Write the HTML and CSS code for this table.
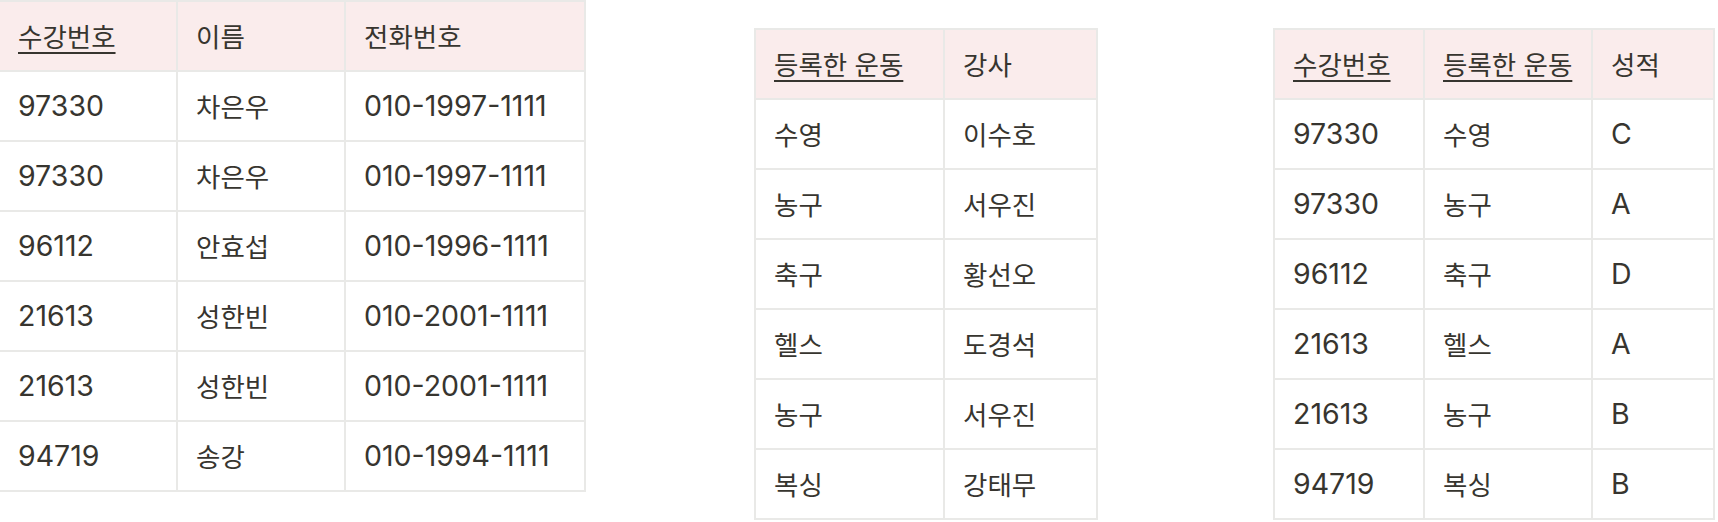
FILE: index.html
```html
<!DOCTYPE html>
<html lang="ko">
<head>
<meta charset="utf-8">
<title>수강 테이블</title>
<link rel="stylesheet" href="styles.css">
</head>
<body>
<div class="board">
  <table class="grid grid-students">
    <colgroup><col class="c178"><col class="c168"><col class="c240"></colgroup>
    <thead>
      <tr><th><span class="key">수강번호</span></th><th>이름</th><th>전화번호</th></tr>
    </thead>
    <tbody>
      <tr><td class="num">97330</td><td>차은우</td><td class="num">010-1997-1111</td></tr>
      <tr><td class="num">97330</td><td>차은우</td><td class="num">010-1997-1111</td></tr>
      <tr><td class="num">96112</td><td>안효섭</td><td class="num">010-1996-1111</td></tr>
      <tr><td class="num">21613</td><td>성한빈</td><td class="num">010-2001-1111</td></tr>
      <tr><td class="num">21613</td><td>성한빈</td><td class="num">010-2001-1111</td></tr>
      <tr><td class="num">94719</td><td>송강</td><td class="num">010-1994-1111</td></tr>
    </tbody>
  </table>

  <table class="grid grid-sports">
    <colgroup><col class="c189"><col class="c153"></colgroup>
    <thead>
      <tr><th><span class="key">등록한 운동</span></th><th>강사</th></tr>
    </thead>
    <tbody>
      <tr><td>수영</td><td>이수호</td></tr>
      <tr><td>농구</td><td>서우진</td></tr>
      <tr><td>축구</td><td>황선오</td></tr>
      <tr><td>헬스</td><td>도경석</td></tr>
      <tr><td>농구</td><td>서우진</td></tr>
      <tr><td>복싱</td><td>강태무</td></tr>
    </tbody>
  </table>

  <table class="grid grid-grades">
    <colgroup><col class="c150"><col class="c168"><col class="c122"></colgroup>
    <thead>
      <tr><th><span class="key">수강번호</span></th><th><span class="key">등록한 운동</span></th><th>성적</th></tr>
    </thead>
    <tbody>
      <tr><td class="num">97330</td><td>수영</td><td class="num">C</td></tr>
      <tr><td class="num">97330</td><td>농구</td><td class="num">A</td></tr>
      <tr><td class="num">96112</td><td>축구</td><td class="num">D</td></tr>
      <tr><td class="num">21613</td><td>헬스</td><td class="num">A</td></tr>
      <tr><td class="num">21613</td><td>농구</td><td class="num">B</td></tr>
      <tr><td class="num">94719</td><td>복싱</td><td class="num">B</td></tr>
    </tbody>
  </table>
</div>
</body>
</html>
```

FILE: styles.css
```css
html, body {
  margin: 0;
  padding: 0;
  background: #ffffff;
  overflow: hidden;
}

.board {
  display: flex;
  align-items: flex-start;
  width: 1718px;
  height: 522px;
}

.grid {
  border-collapse: separate;
  border-spacing: 0;
  table-layout: fixed;
  border-top: 2px solid #e9e9e7;
  border-left: 2px solid #e9e9e7;
  color: #37352f;
  font-family: "Noto Sans CJK KR", sans-serif;
  font-size: 26.5px;
  flex: none;
}

.grid-students {
  width: 588px;
  margin-left: -2px;
}

.grid-sports {
  width: 344px;
  margin-left: 168px;
  margin-top: 28px;
}

.grid-grades {
  width: 442px;
  margin-left: 175px;
  margin-top: 28px;
}

.c178 { width: 178px; }
.c168 { width: 168px; }
.c240 { width: 240px; }
.c189 { width: 189px; }
.c153 { width: 153px; }
.c150 { width: 150px; }
.c122 { width: 122px; }

.grid th,
.grid td {
  box-sizing: border-box;
  height: 70px;
  padding: 0 18px;
  border-right: 2px solid #e9e9e7;
  border-bottom: 2px solid #e9e9e7;
  text-align: left;
  vertical-align: middle;
  font-weight: 400;
  white-space: nowrap;
  line-height: 1.3;
}

.grid th {
  background: #faecec;
}

.grid td.num {
  font-family: "Inter", "Noto Sans CJK KR", sans-serif;
  font-size: 28.5px;
}

.key {
  text-decoration: underline;
  text-decoration-thickness: 2px;
  text-underline-offset: 5px;
}
```
